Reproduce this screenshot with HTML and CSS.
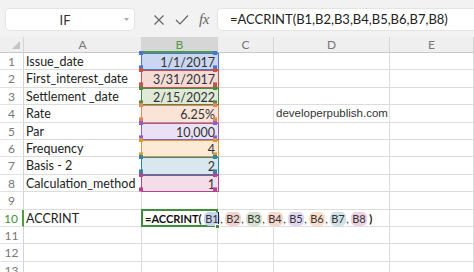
FILE: index.html
```html
<!DOCTYPE html>
<html lang="en">
<head>
    <meta charset="UTF-8">
    <title>ACCRINT</title>
    <link rel="stylesheet" href="styles.css">
</head>
<body>
    <!-- Barra de fórmula -->
    <div class="toolbar">
        <div class="namebox">
            <span class="name">IF</span>
            <svg class="caret" width="5" height="3" viewBox="0 0 5 3"><path d="M0 0 L5 0 L2.5 3 Z" fill="#aaa"/></svg>
        </div>
        <div class="fx-icons">
            <svg width="12" height="12" viewBox="0 0 12 12"><path d="M1.5 1.5 L10.5 10.5 M10.5 1.5 L1.5 10.5" stroke="#666" stroke-width="1.2" fill="none"/></svg>
            <svg width="14" height="12" viewBox="0 0 14 12"><path d="M1 6 L5 10 L13 1.5" stroke="#666" stroke-width="1.2" fill="none"/></svg>
            <span class="fx">fx</span>
        </div>
        <div class="formula">=ACCRINT(B1,B2,B3,B4,B5,B6,B7,B8)</div>
    </div>

    <!-- Planilha -->
    <div class="sheet">
        <div class="hd corner"><span class="tri"></span></div>
        <div class="hd">A</div>
        <div class="hd hd-active">B</div>
        <div class="hd">C</div>
        <div class="hd">D</div>
        <div class="hd">E</div>

        <div class="rn">1</div><div class="c">Issue_date</div><div class="c num ref r1">1/1/2017</div><div class="c"></div><div class="c"></div><div class="c"></div>
        <div class="rn">2</div><div class="c">First_interest_date</div><div class="c num ref r2">3/31/2017</div><div class="c"></div><div class="c"></div><div class="c"></div>
        <div class="rn">3</div><div class="c">Settlement _date</div><div class="c num ref r3">2/15/2022</div><div class="c"></div><div class="c"></div><div class="c"></div>
        <div class="rn">4</div><div class="c">Rate</div><div class="c num ref r4">6.25%</div><div class="c"></div><div class="c site">developerpublish.com</div><div class="c"></div>
        <div class="rn">5</div><div class="c">Par</div><div class="c num ref r5">10,000</div><div class="c"></div><div class="c"></div><div class="c"></div>
        <div class="rn">6</div><div class="c">Frequency</div><div class="c num ref r6">4</div><div class="c"></div><div class="c"></div><div class="c"></div>
        <div class="rn">7</div><div class="c">Basis - 2</div><div class="c num ref r7">2</div><div class="c"></div><div class="c"></div><div class="c"></div>
        <div class="rn">8</div><div class="c">Calculation_method</div><div class="c num ref r8">1</div><div class="c"></div><div class="c"></div><div class="c"></div>
        <div class="rn">9</div><div class="c"></div><div class="c"></div><div class="c"></div><div class="c"></div><div class="c"></div>
        <div class="rn rn-active">10</div><div class="c">ACCRINT</div>
        <div class="c editing"><span class="fn">=ACCRINT(</span> <span class="pill p1">B1</span><span class="cursor"></span>, <span class="pill p2">B2</span>, <span class="pill p3">B3</span>, <span class="pill p4">B4</span>, <span class="pill p5">B5</span>, <span class="pill p6">B6</span>, <span class="pill p7">B7</span>, <span class="pill p8">B8</span> <span class="fn">)</span><span class="handle"></span></div>
        <div class="c spill"></div><div class="c"></div><div class="c"></div>
        <div class="rn">11</div><div class="c"></div><div class="c"></div><div class="c"></div><div class="c"></div><div class="c"></div>
        <div class="rn">12</div><div class="c"></div><div class="c"></div><div class="c"></div><div class="c"></div><div class="c"></div>
        <div class="rn">13</div><div class="c"></div><div class="c"></div><div class="c"></div><div class="c"></div><div class="c"></div>
    </div>
</body>
</html>
```

FILE: styles.css
```css
* {
    margin: 0;
    padding: 0;
    box-sizing: border-box;
}

body {
    width: 474px;
    height: 272px;
    overflow: hidden;
    background: #fff;
    font-family: 'Lato', sans-serif;
    color: #222;
}

/* barra superior */
.toolbar {
    height: 37px;
    background: #f2f2f2;
    display: flex;
    align-items: flex-start;
    padding-top: 9px;
}

.namebox {
    width: 128px;
    height: 21px;
    margin-left: 6px;
    background: #fff;
    border-radius: 4px;
    box-shadow: 0 0 0 1px #e4e4e4;
    display: flex;
    align-items: center;
    position: relative;
}

.name {
    flex: 1;
    text-align: center;
    font-size: 13px;
    color: #333;
}

.caret {
    margin-right: 5px;
}

.fx-icons {
    width: 84px;
    height: 21px;
    display: flex;
    align-items: center;
    gap: 10px;
    padding-left: 19px;
}

.fx {
    font-family: 'Liberation Serif', serif;
    font-style: italic;
    font-size: 15px;
    color: #666;
    letter-spacing: -0.5px;
}

.formula {
    flex: 1;
    height: 21px;
    background: #fff;
    border-radius: 4px 0 0 4px;
    box-shadow: 0 0 0 1px #e4e4e4;
    font-size: 13px;
    line-height: 21px;
    padding-left: 12px;
    color: #222;
}

/* grade */
.sheet {
    display: grid;
    grid-template-columns: 24px 118px 76px 56px 116px 84px;
    grid-template-rows: 16px repeat(13, 17.4px);
    font-size: 12.5px;
}

.hd {
    background: #efefef;
    border-right: 1px solid #d4d4d4;
    border-bottom: 1px solid #c8c8c8;
    color: #777;
    text-align: center;
    font-size: 12px;
    line-height: 15px;
}

.hd-active {
    background: #d6d6d6;
    color: #4e9a47;
    border-bottom: 2px solid #4e9a47;
}

.corner {
    position: relative;
}

.tri {
    position: absolute;
    right: 3px;
    bottom: 3px;
    width: 0;
    height: 0;
    border-left: 8px solid transparent;
    border-bottom: 8px solid #c4c4c4;
}

.rn {
    border-right: 1px solid #d4d4d4;
    border-bottom: 1px solid #e2e2e2;
    color: #777;
    text-align: center;
    font-size: 12px;
    line-height: 17px;
}

.rn-active {
    color: #3f8f3a;
    border-right: 2px solid #4e9a47;
}

.c {
    border-right: 1px solid #dcdcdc;
    border-bottom: 1px solid #dcdcdc;
    padding: 0 2px;
    line-height: 17px;
    white-space: nowrap;
    overflow: hidden;
}

.num {
    text-align: right;
}

.site {
    font-family: 'Liberation Sans', sans-serif;
    font-size: 11.5px;
    color: #333;
    overflow: visible;
}

/* referências coloridas */
.ref {
    position: relative;
    overflow: visible;
    color: #333;
    border: 1px solid var(--bd);
    background: var(--bg);
    margin: 0 -1px 0 -1px;
    padding-right: 3px;
}

.ref::before {
    content: '';
    position: absolute;
    left: -3px;
    top: -3px;
    width: 4px;
    height: 4px;
    background: var(--bd);
    box-shadow: 74px 0 var(--bd), 0 14.4px var(--bd), 74px 14.4px var(--bd);
}

.r1 { --bd: #4c72cf; --bg: #cbd6f1; }
.r2 { --bd: #c9524a; --bg: #f3dcd7; }
.r3 { --bd: #52893f; --bg: #dfe9d8; }
.r4 { --bd: #e8845a; --bg: #fae3d7; }
.r5 { --bd: #8d5dc8; --bg: #eae2f4; }
.r6 { --bd: #d89a3a; --bg: #fcead6; }
.r7 { --bd: #2f88a3; --bg: #d9e7ee; }
.r8 { --bd: #b4448c; --bg: #f4dde8; }

/* célula em edição */
.editing {
    position: relative;
    z-index: 1;
    overflow: visible;
    border: 2px solid #3f8f3a;
    margin: -1px 0 0 -1px;
    padding-left: 2px;
    line-height: 15px;
    color: #333;
    font-size: 11px;
    word-spacing: -0.8px;
}

.fn {
    font-weight: bold;
    color: #111;
}

.pill {
    display: inline-block;
    padding: 0 1.5px;
    border-radius: 5px;
    line-height: 14px;
}

.p1 { background: #c8d3ef; }
.p2 { background: #f2d2cd; }
.p3 { background: #d5e2ce; }
.p4 { background: #f6d8ca; }
.p5 { background: #e0d6f1; }
.p6 { background: #f9dfc9; }
.p7 { background: #d1e1ea; }
.p8 { background: #eed1e1; }

.cursor {
    display: inline-block;
    width: 1px;
    height: 14px;
    background: #222;
    vertical-align: -3px;
    margin-left: -2px;
    margin-right: 1px;
}

.handle {
    position: absolute;
    left: 72px;
    bottom: -4px;
    width: 5px;
    height: 5px;
    background: #3f8f3a;
    border: 1px solid #fff;
}

.spill {
    border-right-color: transparent;
}
```
